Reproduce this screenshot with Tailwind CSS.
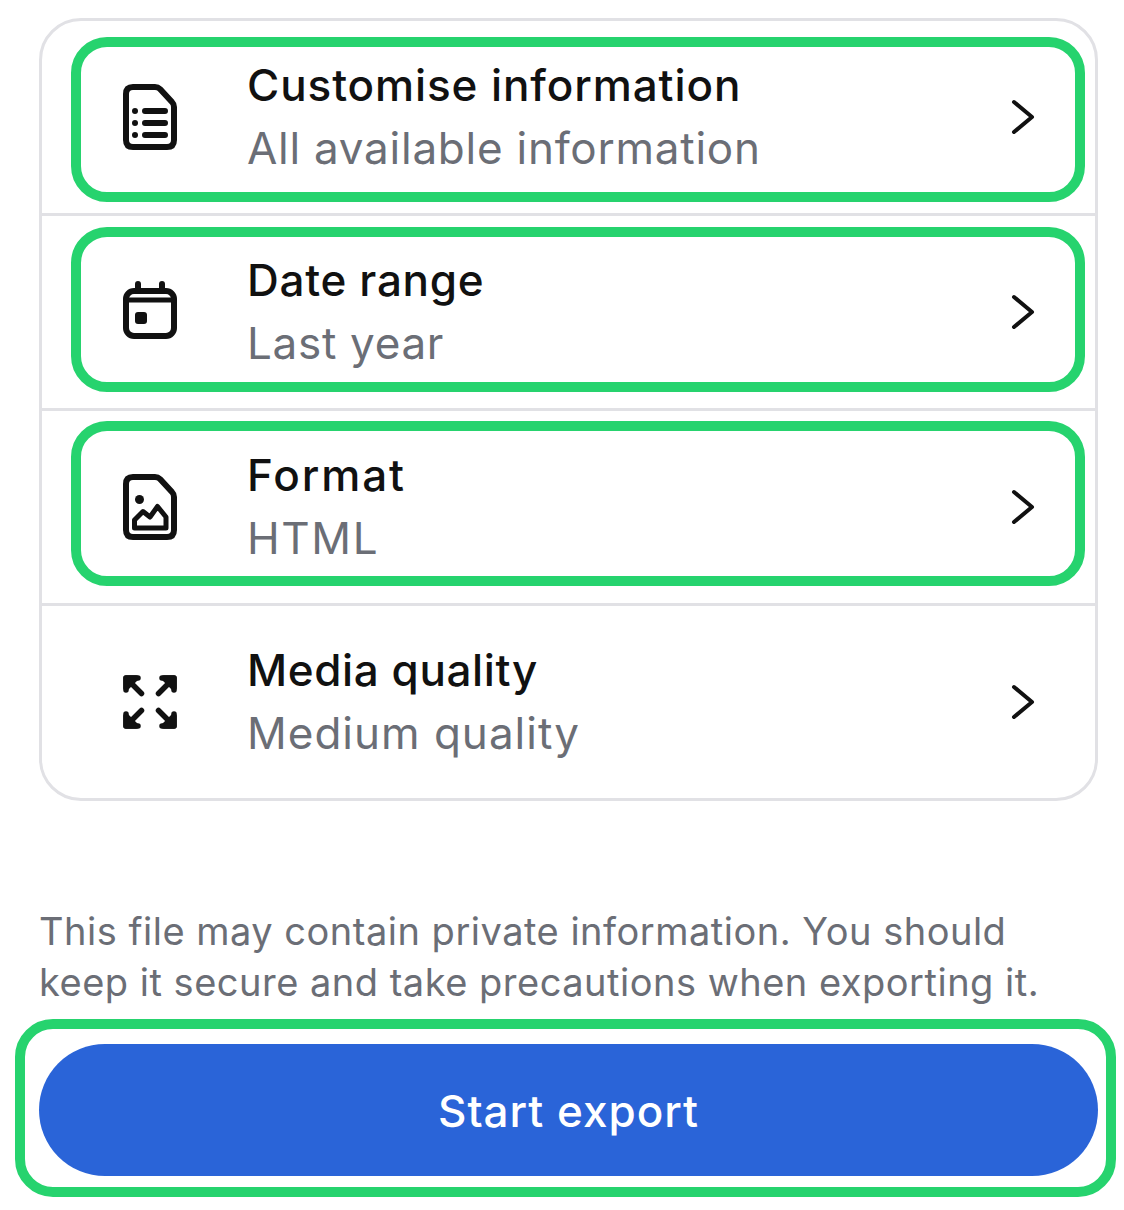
<!DOCTYPE html>
<html lang="en">
<head>
    <meta charset="UTF-8">
    <meta name="viewport" content="width=device-width, initial-scale=1.0">
    <title>Export information</title>
    <script src="https://cdn.jsdelivr.net/npm/@tailwindcss/browser@4"></script>
</head>
<body class="bg-white min-h-screen overflow-hidden font-['Inter',sans-serif]">
    <div class="pt-[18px] pl-[39px] w-[1098px]">
        <!-- settings card -->
        <div class="w-[1059px] h-[783px] rounded-[42px] border-[3px] border-[#e1e1e5] flex flex-col">
            <div class="relative h-[192px] flex items-center">
                <svg class="ml-[58px] w-[100px] h-[100px] shrink-0" viewBox="0 0 100 100" fill="none" stroke="#111" stroke-width="6" stroke-linecap="round" stroke-linejoin="round">
                    <path d="M33 20H55Q58 20 60 22L72 35Q74 37 74 40V73Q74 80 67 80H33Q26 80 26 73V27Q26 20 33 20Z"/>
                    <path d="M45 44H65M45 56H65M45 68H65"/>
                    <circle cx="35" cy="44" r="3" fill="#111" stroke="none"/>
                    <circle cx="35" cy="56" r="3" fill="#111" stroke="none"/>
                    <circle cx="35" cy="68" r="3" fill="#111" stroke="none"/>
                </svg>
                <div class="ml-[47px] flex-1">
                    <div class="text-[44px] leading-[63px] font-medium tracking-[0.9px] text-[#111]">Customise information</div>
                    <div class="text-[44px] leading-[63px] tracking-[0.75px] text-[#6b6e76]">All available information</div>
                </div>
                <svg class="mr-[60px] w-[24px] h-[38px]" viewBox="0 0 24 38" fill="none" stroke="#111" stroke-width="4" stroke-linecap="round" stroke-linejoin="round"><path d="M3 4L21 19L3 34"/></svg>
                <div class="absolute left-[29px] top-[16px] w-[1014px] h-[165px] rounded-[36px] border-[10px] border-[#26d36e]"></div>
            </div>
            <div class="relative h-[195px] flex items-center border-t-[3px] border-[#e1e1e5]">
                <svg class="ml-[58px] w-[100px] h-[100px] shrink-0" viewBox="0 0 100 100" fill="none" stroke="#111" stroke-width="6" stroke-linecap="round" stroke-linejoin="round">
                    <rect x="26" y="29" width="48" height="45" rx="8"/>
                    <path d="M26 38H74" stroke-width="5"/>
                    <path d="M38 22V28M62 22V28"/>
                    <rect x="35" y="50" width="12" height="12" rx="3" fill="#111" stroke="none"/>
                </svg>
                <div class="ml-[47px] flex-1">
                    <div class="text-[44px] leading-[63px] font-medium tracking-[0.7px] text-[#111]">Date range</div>
                    <div class="text-[44px] leading-[63px] tracking-[0.7px] text-[#6b6e76]">Last year</div>
                </div>
                <svg class="mr-[60px] w-[24px] h-[38px]" viewBox="0 0 24 38" fill="none" stroke="#111" stroke-width="4" stroke-linecap="round" stroke-linejoin="round"><path d="M3 4L21 19L3 34"/></svg>
                <div class="absolute left-[29px] top-[8px] mt-[3px] w-[1014px] h-[165px] rounded-[36px] border-[10px] border-[#26d36e]"></div>
            </div>
            <div class="relative h-[195px] flex items-center border-t-[3px] border-[#e1e1e5]">
                <svg class="ml-[58px] w-[100px] h-[100px] shrink-0" viewBox="0 0 100 100" fill="none" stroke="#111" stroke-width="6" stroke-linecap="round" stroke-linejoin="round">
                    <path d="M33 20H55Q58 20 60 22L72 35Q74 37 74 40V73Q74 80 67 80H33Q26 80 26 73V27Q26 20 33 20Z"/>
                    <circle cx="39.5" cy="42.5" r="4.5" fill="#111" stroke="none"/>
                    <path d="M34.5 63L43 54.5L50 60L57.5 49.5L66 60V71H34.5Z" stroke-width="5"/>
                </svg>
                <div class="ml-[47px] flex-1">
                    <div class="text-[44px] leading-[63px] font-medium tracking-[1.9px] text-[#111]">Format</div>
                    <div class="text-[44px] leading-[63px] tracking-[1.6px] text-[#6b6e76]">HTML</div>
                </div>
                <svg class="mr-[60px] w-[24px] h-[38px]" viewBox="0 0 24 38" fill="none" stroke="#111" stroke-width="4" stroke-linecap="round" stroke-linejoin="round"><path d="M3 4L21 19L3 34"/></svg>
                <div class="absolute left-[29px] top-[10px] w-[1014px] h-[165px] rounded-[36px] border-[10px] border-[#26d36e]"></div>
            </div>
            <div class="relative flex-1 flex items-center border-t-[3px] border-[#e1e1e5]">
                <svg class="ml-[58px] w-[100px] h-[100px] shrink-0" viewBox="0 0 100 100" fill="none" stroke="#111" stroke-width="5.5" stroke-linecap="round" stroke-linejoin="round">
                    <path d="M26 26H36L26 36Z" fill="#111"/>
                    <path d="M38 26H26V38M28 28L41.5 41.5"/>
                    <path d="M74 26H64L74 36Z" fill="#111"/>
                    <path d="M62 26H74V38M72 28L58.5 41.5"/>
                    <path d="M26 74H36L26 64Z" fill="#111"/>
                    <path d="M38 74H26V62M28 72L41.5 58.5"/>
                    <path d="M74 74H64L74 64Z" fill="#111"/>
                    <path d="M62 74H74V62M72 72L58.5 58.5"/>
                </svg>
                <div class="ml-[47px] flex-1">
                    <div class="text-[44px] leading-[63px] font-medium tracking-[0.6px] text-[#111]">Media quality</div>
                    <div class="text-[44px] leading-[63px] tracking-[1px] text-[#6b6e76]">Medium quality</div>
                </div>
                <svg class="mr-[60px] w-[24px] h-[38px]" viewBox="0 0 24 38" fill="none" stroke="#111" stroke-width="4" stroke-linecap="round" stroke-linejoin="round"><path d="M3 4L21 19L3 34"/></svg>
            </div>
        </div>

        <p class="mt-[105px] text-[38px] leading-[51px] tracking-[0.5px] text-[#6b6e76] whitespace-nowrap">This file may contain private information. You should<br>keep it secure and take precautions when exporting it.</p>

        <div class="relative mt-[36px] w-[1059px] h-[132px] rounded-full bg-[#2a64d8] flex items-center justify-center">
            <span class="pt-[2px] text-[44px] font-medium tracking-[1px] text-white">Start export</span>
            <div class="absolute left-[-24px] top-[-25px] w-[1101px] h-[178px] rounded-[38px] border-[10px] border-[#26d36e]"></div>
        </div>
    </div>
</body>
</html>
